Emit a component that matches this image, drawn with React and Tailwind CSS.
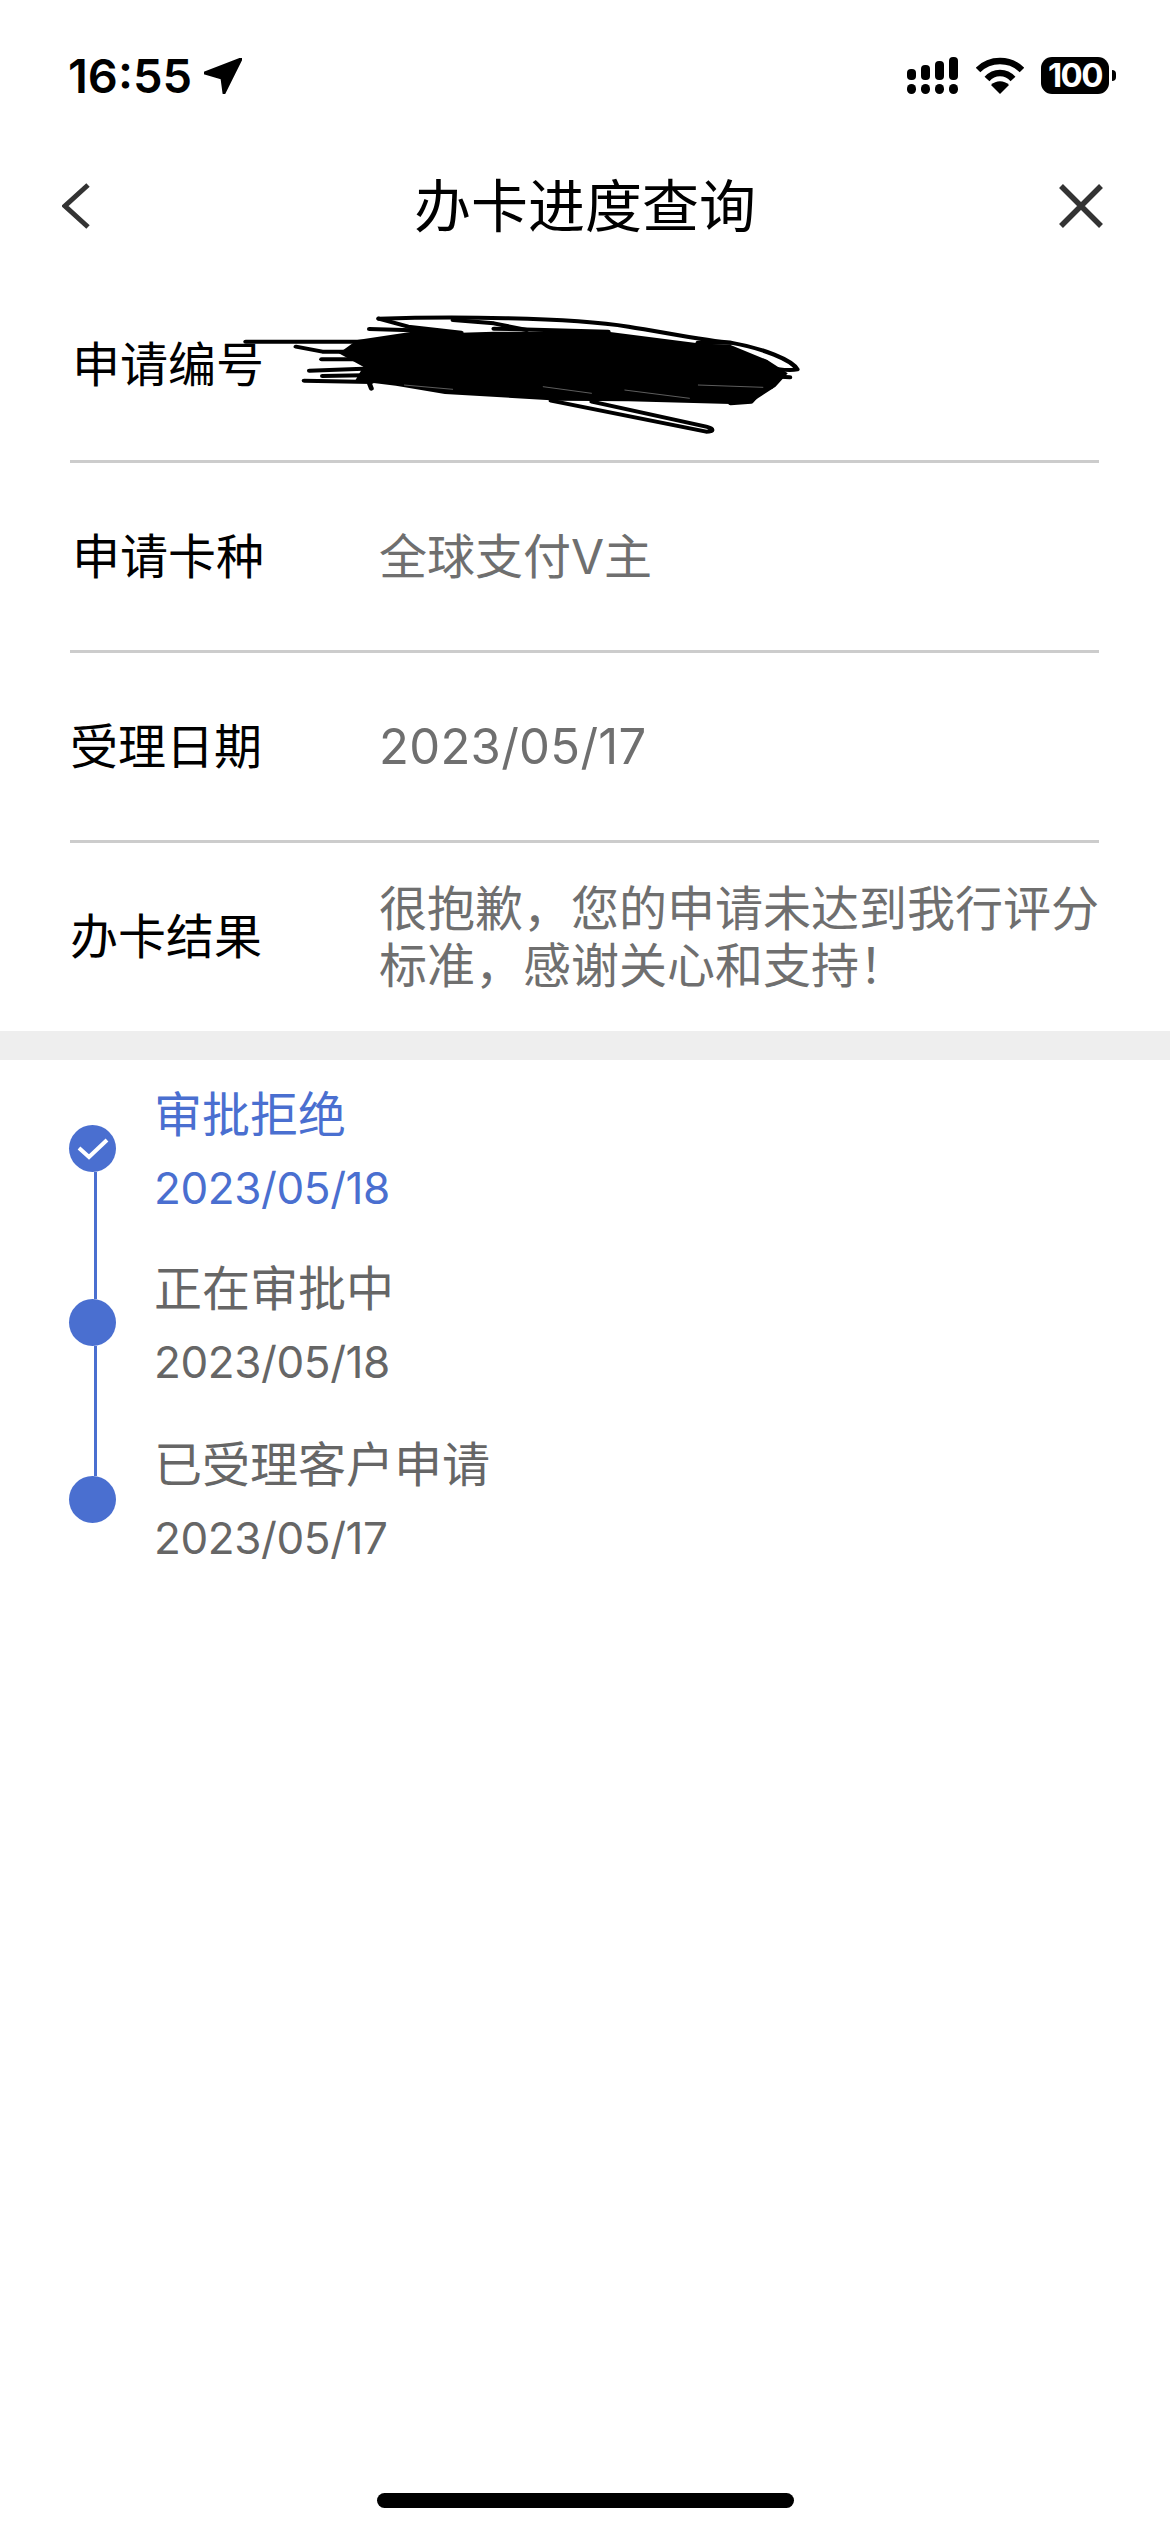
import React from 'react';

const cjk = "font-['Inter','Noto_Sans_CJK_SC',sans-serif]";

const rows = [
  { label: '申请卡种', value: '全球支付V主', valueClass: 'text-[48px]' },
  { label: '受理日期', value: '2023/05/17', valueClass: 'text-[49px] tracking-[0.3px]' },
];

const steps = [
  { title: '审批拒绝', date: '2023/05/18', active: true, height: 'h-[174px]' },
  { title: '正在审批中', date: '2023/05/18', height: 'h-[176px]' },
  { title: '已受理客户申请', date: '2023/05/17', height: 'h-[176px]' },
];

const StatusBar = () => (
  <div className="h-[150px] shrink-0">
    <div className="flex items-center pl-[68px] pr-[54px] pt-[57px] h-[94px]">
      <span className="font-['Inter',sans-serif] font-semibold text-[47px] leading-[44px] text-black">16:55</span>
      <svg className="ml-[12px]" width="38" height="36" viewBox="0 0 38 36">
        <path d="M37 1 L20 35 L18 20 L1 15 Z" fill="#000" stroke="#000" strokeWidth="3" strokeLinejoin="round" />
      </svg>
      <div className="ml-auto flex items-center">
        <svg width="52" height="38" viewBox="0 0 52 38" fill="#000">
          <rect x="0" y="12" width="9" height="11" rx="4" />
          <rect x="14" y="8" width="9" height="15" rx="4" />
          <rect x="28" y="4" width="9" height="19" rx="4" />
          <rect x="42" y="0" width="9" height="23" rx="4" />
          <rect x="0" y="27" width="9" height="10" rx="4.5" />
          <rect x="14" y="27" width="9" height="10" rx="4.5" />
          <rect x="28" y="27" width="9" height="10" rx="4.5" />
          <rect x="42" y="27" width="9" height="10" rx="4.5" />
        </svg>
        <svg className="ml-[17px]" width="48" height="38" viewBox="0 0 48 38">
          <path d="M2 13 C14 1 34 1 46 13" fill="none" stroke="#000" strokeWidth="6.5" />
          <path d="M11 22 C18 14 30 14 37 22" fill="none" stroke="#000" strokeWidth="6.5" />
          <path d="M24 37 L15 28 C20 23 28 23 33 28 Z" fill="#000" />
        </svg>
        <div className="ml-[17px] w-[68px] h-[37px] rounded-[11px] bg-black flex items-center justify-center font-['Inter',sans-serif] font-bold text-[33px] leading-none tracking-[-1.5px] text-white">100</div>
        <div className="ml-[3px] w-[4px] h-[11px] rounded-r-full bg-black"></div>
      </div>
    </div>
  </div>
);

const NavBar = () => (
  <div className="h-[112px] shrink-0 flex items-center justify-between pl-[62px] pr-[67px]">
    <div className="w-[49px]">
      <svg width="28" height="46" viewBox="0 0 28 46" fill="none" stroke="#333" strokeWidth="5">
        <path d="M26 2 L3 23 L26 44" />
      </svg>
    </div>
    <span className={`${cjk} text-[57px] leading-none text-black`}>办卡进度查询</span>
    <svg width="44" height="44" viewBox="0 0 44 44" fill="none" stroke="#333" strokeWidth="5.5">
      <path d="M2 2 L42 42 M42 2 L2 42" />
    </svg>
  </div>
);

// the blacked-out application number, coords taken from a 2.45x / 3x crop
const Scribble = () => (
  <svg className="absolute left-[200px] top-[28px]" width="640" height="180" viewBox="0 0 1568 540" preserveAspectRatio="none" fill="none">
    <path d="M385 150 L560 118 L640 128 L720 125 L1000 125 L1220 160 L1300 165 L1390 210 L1440 250 L1410 290 L1360 330 L1300 342 L1050 334 L880 332 L600 312 L480 287 L380 272 L400 230 L340 190 Z" fill="#000" />
    <g stroke="#000" strokeWidth="12" strokeLinecap="round" strokeLinejoin="round">
      <path d="M438 86 C600 80 900 80 1050 110 C1150 130 1250 155 1300 158 C1380 175 1450 210 1463 238 C1440 245 1400 235 1380 230" />
      <path d="M438 86 L510 110 L640 128" />
      <path d="M620 90 L720 100 L800 120" />
      <path d="M720 116 L1000 125" />
      <path d="M415 117 L560 122" />
      <path d="M112 155 L400 155" />
      <path d="M235 170 L300 185 L400 185" />
      <path d="M298 208 L400 208" />
      <path d="M268 242 L400 236" />
      <path d="M300 258 L400 256" />
      <path d="M255 272 L420 276" />
      <path d="M415 280 L420 296" />
      <path d="M1220 158 L1300 158" />
      <path d="M1280 195 L1385 215" />
      <path d="M1300 228 L1420 240" />
      <path d="M1300 252 L1445 262" />
      <path d="M1300 290 L1398 292" />
      <path d="M1250 325 L1360 322 L1350 335 L1300 340" />
      <path d="M860 332 L1240 425 C1260 425 1258 415 1240 410 L960 335" />
    </g>
    <g stroke="#fff" strokeWidth="1">
      <path d="M500 285 L620 298 M840 290 L960 310 M1040 300 L1200 325 M1220 285 L1380 292" />
    </g>
  </svg>
);

const InfoRow = ({ label, value, valueClass, labelClass }) => (
  <div className="ml-[70px] mr-[71px] h-[190px] border-b-[3px] border-[#cccccc] flex items-center">
    <span className={`${cjk} ${labelClass} w-[309px] text-[48px] leading-none text-black shrink-0`}>{label}</span>
    <span className={`${cjk} ${valueClass} leading-none text-[#6f6f6f]`}>{value}</span>
  </div>
);

const Timeline = () => (
  <div className="flex pl-[69px] pt-[65px]">
    <div className="w-[85px] shrink-0">
      <div className="w-[47px] h-[47px] rounded-full bg-[#4a6fd0] flex items-center justify-center">
        <svg width="32" height="24" viewBox="0 0 32 24" fill="none" stroke="#fff" strokeWidth="4">
          <path d="M2 11 L12 20 L30 3" />
        </svg>
      </div>
      <div className="ml-[25px] w-[3px] h-[127px] bg-[#4a6fd0]"></div>
      <div className="w-[47px] h-[47px] rounded-full bg-[#4a6fd0]"></div>
      <div className="ml-[25px] w-[3px] h-[130px] bg-[#4a6fd0]"></div>
      <div className="w-[47px] h-[47px] rounded-full bg-[#4a6fd0]"></div>
    </div>
    <div className="-mt-[40px]">
      {steps.map((s) => (
        <div key={s.title} className={s.height}>
          <div className={`${cjk} text-[48px] leading-[60px] ${s.active ? 'text-[#4a6fd0]' : 'text-[#666666]'}`}>{s.title}</div>
          <div className={`${cjk} mt-[13px] text-[44px] tracking-[-0.4px] leading-[60px] ${s.active ? 'text-[#4a6fd0]' : 'text-[#666666]'}`}>{s.date}</div>
        </div>
      ))}
    </div>
  </div>
);

export default function App() {
  return (
    <div className="w-[1170px] h-[2532px] bg-white relative overflow-hidden flex flex-col">
      <StatusBar />
      <NavBar />
      <div className="relative">
        <Scribble />
        <div className="ml-[70px] mr-[71px] h-[201px] pt-[8px] border-b-[3px] border-[#cccccc] flex items-center">
          <span className={`${cjk} pl-[2px] text-[48px] leading-none text-black`}>申请编号</span>
        </div>
        <InfoRow {...rows[0]} labelClass="pl-[2px]" />
        <InfoRow {...rows[1]} labelClass="pl-0" />
        <div className="ml-[70px] mr-[71px] h-[188px] flex items-center">
          <span className={`${cjk} w-[309px] text-[48px] leading-none text-black shrink-0`}>办卡结果</span>
          <span className={`${cjk} text-[48px] leading-[57px] whitespace-nowrap text-[#6f6f6f]`}>很抱歉，您的申请未达到我行评分<br />标准，感谢关心和支持！</span>
        </div>
      </div>
      <div className="h-[29px] bg-[#eeeeee] shrink-0"></div>
      <Timeline />
      <div className="absolute left-[377px] top-[2493px] w-[417px] h-[15px] rounded-full bg-black"></div>
    </div>
  );
}
